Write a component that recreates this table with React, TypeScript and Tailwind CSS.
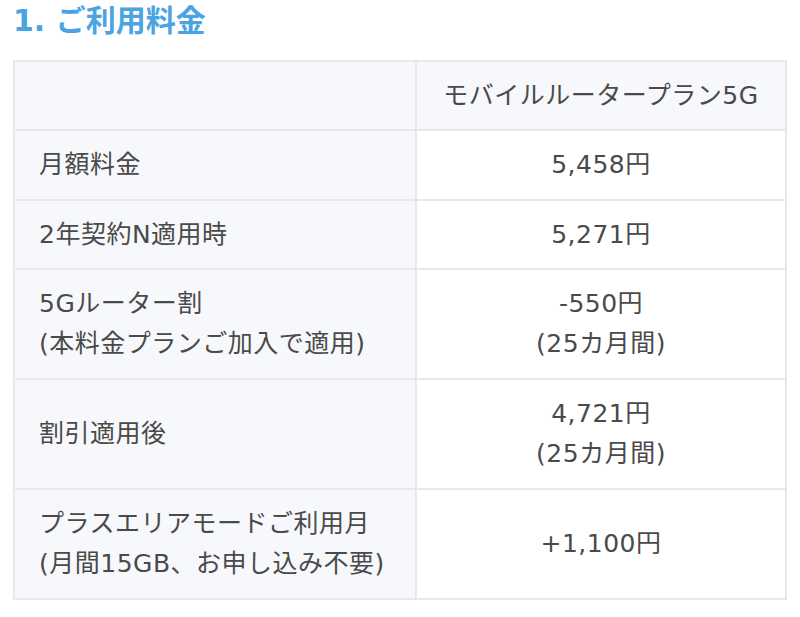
const rows: { label: string[]; value: string[] }[] = [
  { label: ["月額料金"], value: ["5,458円"] },
  { label: ["2年契約N適用時"], value: ["5,271円"] },
  { label: ["5Gルーター割", "(本料金プランご加入で適用)"], value: ["-550円", "(25カ月間)"] },
  { label: ["割引適用後"], value: ["4,721円", "(25カ月間)"] },
  { label: ["プラスエリアモードご利用月", "(月間15GB、お申し込み不要)"], value: ["+1,100円"] },
];

export default function App() {
  return (
    <div className="w-[800px] h-[617px] bg-white px-[13px] pt-[3px] font-['DejaVu_Sans','Noto_Sans_CJK_JP',sans-serif]">
      <h2 className="text-[30px] leading-[36px] font-bold text-[#4aa3e2]">1. ご利用料金</h2>
      <table className="mt-[21px] w-[774px] border-collapse text-[25px] leading-[40px] tracking-[0.5px] text-[#4a4a4a]">
        <thead>
          <tr className="h-[69px] bg-[#f7f8fb]">
            <th className="w-[402px] border-2 border-[#e7e8ef]"></th>
            <th className="border-2 border-[#e7e8ef] font-normal text-center">モバイルルータープラン5G</th>
          </tr>
        </thead>
        <tbody>
          {rows.map((r, i) => (
            <tr key={i} className={r.label.length > 1 || r.value.length > 1 ? "h-[110px]" : i === 1 ? "h-[69px]" : "h-[70px]"}>
              <td className="border-2 border-[#e7e8ef] bg-[#f7f8fb] pl-[24px] align-middle">
                {r.label.map((l) => (
                  <div key={l}>{l}</div>
                ))}
              </td>
              <td className="border-2 border-[#e7e8ef] bg-white text-center align-middle">
                {r.value.map((v) => (
                  <div key={v}>{v}</div>
                ))}
              </td>
            </tr>
          ))}
        </tbody>
      </table>
    </div>
  );
}
